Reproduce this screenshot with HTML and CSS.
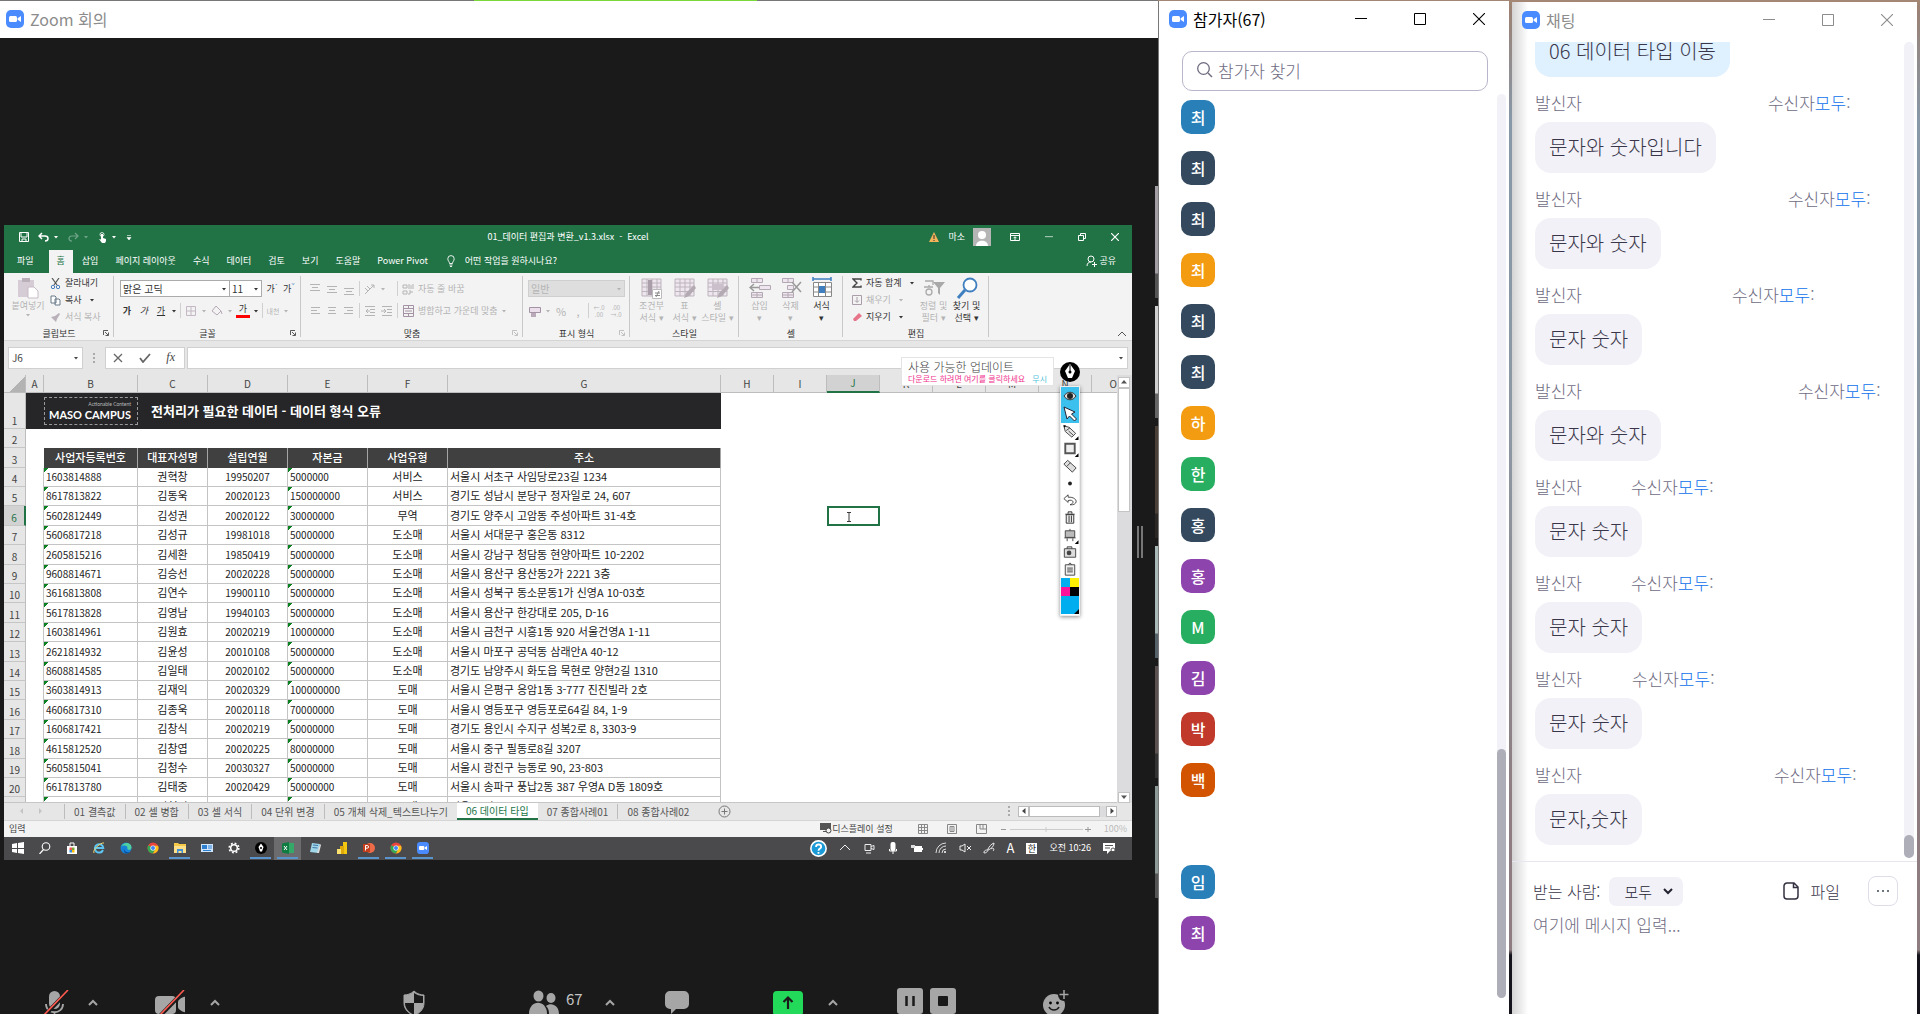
FILE: index.html
```html
<!DOCTYPE html>
<html lang="ko">
<head>
<meta charset="utf-8">
<title>Zoom 회의</title>
<link rel="stylesheet" href="styles.css">
</head>
<body>
<svg class="defs" aria-hidden="true">
  <symbol id="zoom" viewBox="0 0 18 18"><rect width="18" height="18" rx="5" fill="#4a8cff"/><rect x="3" y="6" width="8" height="6" rx="1.5" fill="#fff"/><path d="M11.6 8.2 15 6v6l-3.4-2.2z" fill="#fff"/></symbol>
  <symbol id="min" viewBox="0 0 12 12"><path d="M0 5.5h12" stroke="currentColor"/></symbol>
  <symbol id="max" viewBox="0 0 12 12"><path d="M.5.5h11v11H.5z" fill="none" stroke="currentColor"/></symbol>
  <symbol id="close" viewBox="0 0 12 12"><path d="m0 0 12 12M12 0 0 12" stroke="currentColor" stroke-width="1.1"/></symbol>
  <symbol id="caret" viewBox="0 0 6 6"><path d="M1 2h4L3 4.500z" fill="currentColor"/></symbol>
  <symbol id="up" viewBox="0 0 10 7"><path d="m1 6 4-4 4 4" fill="none" stroke="currentColor" stroke-width="2"/></symbol>
  <symbol id="launch" viewBox="0 0 6 6"><path d="M.5 5V.5H5M2 2l3 3M5.500 2.500v3h-3" fill="none" stroke="currentColor" stroke-width=".8"/></symbol>
  <symbol id="chrome" viewBox="0 0 12 12"><circle cx="6" cy="6" r="5.500" fill="#e8453c"/><path d="M1.200 3.300A5.500 5.500 0 0 0 6 11.500L8.300 7z" fill="#34a853"/><path d="M6 11.500A5.500 5.500 0 0 0 11 3.700H6l2.300 3.600z" fill="#fbc116"/><circle cx="6" cy="6" r="2.600" fill="#fff"/><circle cx="6" cy="6" r="2" fill="#4285f4"/></symbol>
  <symbol id="table" viewBox="0 0 22 22"><path d="M1 2h19v17H1zM1 6h19M1 10h19M1 14.500h19M6 2v17M11 2v17M16 2v17" fill="#eee6ee" stroke="#bdb4bd"/></symbol>
</svg>

<main class="desktop">
  <section class="window meeting" aria-label="Zoom 회의">
    <header class="titlebar"><svg class="logo"><use href="#zoom"/></svg><h1>Zoom 회의</h1></header>
    <div class="stage">
      <div class="excel">
        <div class="x-title">
          <div class="x-quick">
            <svg width="10" height="10" viewBox="0 0 10 10"><path d="M.5.5h9v9h-9zM2 1v4h6V1M3 9V7h4v2" fill="none" stroke="#fff"/></svg>
            <svg width="11" height="10" viewBox="0 0 11 10"><path d="M4 1 1 4l3 3M1 4h6c4 0 4 5 0 5" fill="none" stroke="#fff" stroke-width="1.500"/></svg>
            <svg class="near" width="6" height="6"><use href="#caret"/></svg>
            <svg class="dim" width="11" height="10" viewBox="0 0 11 10"><path d="m7 1 3 3-3 3M10 4H4C0 4 0 9 4 9" fill="none" stroke="#fff" stroke-width="1.200"/></svg>
            <svg class="dim near" width="6" height="6"><use href="#caret"/></svg>
            <svg width="9" height="11" viewBox="0 0 9 11"><circle cx="4" cy="2.500" r="2" fill="none" stroke="#fff" stroke-width=".8"/><path d="M3 2h2v4l3 1v2l-1 2H4L1 7l2 .5z" fill="#fff"/></svg>
            <svg class="near" width="6" height="6"><use href="#caret"/></svg>
            <svg width="6" height="8" viewBox="0 0 6 8"><path d="M1 2.500h4M1 4.500h4L3 7z" fill="#fff" stroke="#fff" stroke-width=".6"/></svg>
          </div>
          <p>01_데이터 편집과 변환_v1.3.xlsx&nbsp; -&nbsp; Excel</p>
          <div class="x-account">
            <svg width="10" height="10" viewBox="0 0 10 10"><path d="m5 0 5 10H0z" fill="#f3b35a"/><path d="M5 3v4M5 8v1" stroke="#333"/></svg>
            <span>마소</span>
            <svg class="face" width="18" height="18" viewBox="0 0 18 18"><path d="M0 0h18v18H0z" fill="#b5b5b5"/><circle cx="9" cy="7" r="4" fill="#fff"/><path d="M3 18c0-7 12-7 12 0z" fill="#fff"/></svg>
            <svg class="ribbon-toggle" width="10" height="10" viewBox="0 0 10 10"><path d="M.5 1.500h9v7h-9zM.5 3.500h9M5 8V5M3.500 6.200 5 4.700l1.500 1.500" fill="none" stroke="#fff"/></svg>
            <button aria-label="최소화"><svg width="8" height="8"><use href="#min"/></svg></button>
            <button aria-label="복원"><svg width="8" height="8" viewBox="0 0 8 8"><path d="M.5 2.500h5v5h-5zM2.500 2V.5h5v5H6" fill="none" stroke="#fff"/></svg></button>
            <button aria-label="닫기"><svg width="8" height="8" viewBox="0 0 8 8"><path d="m0 0 8 8M8 0 0 8" stroke="#fff" stroke-width="1.200"/></svg></button>
          </div>
        </div>
        <nav class="x-tabs">
          <button class="file">파일</button><button class="on">홈</button><button>삽입</button><button>페이지 레이아웃</button><button>수식</button><button>데이터</button><button>검토</button><button>보기</button><button>도움말</button><button>Power Pivot</button>
          <label class="tell"><svg width="8" height="12" viewBox="0 0 8 12"><path d="M2.500 8.500C2.500 6.500.8 6 .8 3.800a3.200 3.200 0 0 1 6.400 0C7.200 6 5.500 6.500 5.500 8.500zM2.500 10h3M3 11.500h2" fill="none" stroke="#fff" stroke-width=".9"/></svg><input value="어떤 작업을 원하시나요?"></label>
          <button class="share"><svg width="11" height="12" viewBox="0 0 11 12"><circle cx="5" cy="4" r="3" fill="none" stroke="#fff"/><path d="M1 11c0-3 2-4 4-4M6 9.500h5M8.500 7v5" fill="none" stroke="#fff"/></svg>공유</button>
        </nav>

        <div class="ribbon">
          <section class="group clip">
            <div class="g-body">
              <button class="big off"><svg width="22" height="22" viewBox="0 0 22 22"><path d="M1 3h16v17H1z" fill="#d6ccd6"/><path d="M5 1h8v4H5z" fill="#b9b0b9"/><path d="M11 10h6l4 4v7H11z" fill="#fff" stroke="#c5bcc5"/></svg><span>붙여넣기</span><svg class="car"><use href="#caret"/></svg></button>
              <div class="stack">
                <button><svg width="11" height="11" viewBox="0 0 11 11"><path d="m2 0 5 7M9 0 4 7" stroke="#555" stroke-width="1.200"/><circle cx="3" cy="9" r="1.700" fill="none" stroke="#4a7ebb"/><circle cx="8" cy="9" r="1.700" fill="none" stroke="#4a7ebb"/></svg>잘라내기</button>
                <button><svg width="11" height="11" viewBox="0 0 11 11"><path d="M1 1h4l1 1v6H1zM5 4h4l1 1v5H5z" fill="#fff" stroke="#687888"/></svg>복사<svg class="car"><use href="#caret"/></svg></button>
                <button class="off"><svg width="11" height="11" viewBox="0 0 11 11"><path d="m1 5 5 5 1-3 3-5-1-1-4 3z" fill="#b9b0b9"/></svg>서식 복사</button>
              </div>
            </div>
            <h2>클립보드</h2><svg class="launch"><use href="#launch"/></svg>
          </section>
          <section class="group font">
            <div class="g-rows">
              <div class="r-row tight">
                <span class="combo name"><select aria-label="글꼴"><option>맑은 고딕</option></select><svg><use href="#caret"/></svg></span><span class="combo size"><select aria-label="글꼴 크기"><option>11</option></select><svg><use href="#caret"/></svg></span>
                <button class="glyph">가<sup>ˆ</sup></button><button class="glyph">가<sup>ˇ</sup></button>
              </div>
              <div class="r-row">
                <button class="glyph b">가</button><button class="glyph i">가</button><button class="glyph u">가</button><svg class="car"><use href="#caret"/></svg><i class="sep"></i>
                <svg class="ic" viewBox="0 0 14 14"><path d="M2.500 2.500h9v9h-9zM7 2v10M2 7h10" fill="none" stroke="#c3b8c3"/></svg><svg class="car off"><use href="#caret"/></svg>
                <svg class="ic" viewBox="0 0 14 14"><path d="m6 2 5 5-4 4-5-4zM11 7l1 3" fill="none" stroke="#b5aab5"/></svg><svg class="car off"><use href="#caret"/></svg>
                <button class="glyph red">가</button><svg class="car"><use href="#caret"/></svg><i class="sep"></i>
                <button class="glyph tiny off">내천</button><svg class="car off"><use href="#caret"/></svg>
              </div>
            </div>
            <h2>글꼴</h2><svg class="launch"><use href="#launch"/></svg>
          </section>
          <section class="group align">
            <div class="g-rows">
              <div class="r-row off">
                <svg class="ic" viewBox="0 0 14 14"><path d="M2 2.500h10M4 5.500h6M2 8.500h10" stroke="currentColor"/></svg><svg class="ic" viewBox="0 0 14 14"><path d="M2 4.500h10M4 7.500h6M2 10.500h10" stroke="currentColor"/></svg><svg class="ic" viewBox="0 0 14 14"><path d="M2 6.500h10M4 9.500h6M2 12.500h10" stroke="currentColor"/></svg><i class="sep"></i>
                <svg class="ic" viewBox="0 0 14 14"><path d="m2 12 9-9M8 3h3v3M2 6l3 3M4 4l3 3" fill="none" stroke="currentColor"/></svg><span class="ic"><svg class="car"><use href="#caret"/></svg></span><i class="sep"></i>
                <svg class="ic" viewBox="0 0 14 14"><path d="M2 3h4v3H2zM8 2v5M10 3v4M12 2v5M2 9h4v3H2zM9 10h3M9 8v4H7" fill="none" stroke="currentColor"/></svg><span>자동 줄 바꿈</span>
              </div>
              <div class="r-row off">
                <svg class="ic" viewBox="0 0 14 14"><path d="M3 3.500h9M3 6.500h6M3 9.500h9" stroke="currentColor"/></svg><svg class="ic" viewBox="0 0 14 14"><path d="M3 3.500h8M4 6.500h6M3 9.500h8" stroke="currentColor"/></svg><svg class="ic" viewBox="0 0 14 14"><path d="M2 3.500h9M5 6.500h6M2 9.500h9" stroke="currentColor"/></svg><i class="sep"></i>
                <svg class="ic" viewBox="0 0 14 14"><path d="M2 2.500h10M7 5.500h5M7 8.500h5M2 11.500h10M5 5 3 7l2 2M3 7h4" fill="none" stroke="currentColor"/></svg><svg class="ic" viewBox="0 0 14 14"><path d="M2 2.500h10M7 5.500h5M7 8.500h5M2 11.500h10M4 5l2 2-2 2M1 7h5" fill="none" stroke="currentColor"/></svg><i class="sep"></i>
                <svg class="ic" viewBox="0 0 14 14"><path d="M2.500 1.500h10v11h-10zM3 4.500h9M3 9.500h9M7.500 2v2M7.500 10v2M4 7h7" fill="none" stroke="#a493a4"/></svg><span>병합하고 가운데 맞춤</span><svg class="car"><use href="#caret"/></svg>
              </div>
            </div>
            <h2>맞춤</h2><svg class="launch off"><use href="#launch"/></svg>
          </section>
          <section class="group number">
            <div class="g-rows">
              <div class="r-row"><span class="combo fmt"><select aria-label="표시 형식" disabled><option>일반</option></select><svg><use href="#caret"/></svg></span></div>
              <div class="r-row off">
                <svg class="ic" viewBox="0 0 14 14"><path d="M1.500 3.500h11v5h-11z" fill="#eadfea" stroke="#a493a4"/><path d="M3 9h5v4H3z" fill="#b9a9b9"/></svg><svg class="car"><use href="#caret"/></svg><button class="glyph pct">%</button><button class="glyph pct">,</button><i class="sep"></i><button class="glyph dec">←.0<br>.00</button><button class="glyph dec">.00<br>→.0</button>
              </div>
            </div>
            <h2>표시 형식</h2><svg class="launch off"><use href="#launch"/></svg>
          </section>
          <section class="group style">
            <div class="g-body off">
              <button class="big"><svg width="22" height="22"><use href="#table"/><path d="M7 3h4v15H7z" fill="#a99ea9"/><path d="M11.500 12.500h9v9h-9z" fill="#fff" stroke="#bbb"/><path d="M14 16h5M14 18.500h5M18 14l-3 6" stroke="#888"/></svg><span>조건부<br>서식 ▾</span></button>
              <button class="big"><svg width="22" height="22"><use href="#table"/><path d="m20 8-8 8-2 5 5-2 7-8z" fill="#b3aab3"/></svg><span>표<br>서식 ▾</span></button>
              <button class="big"><svg width="22" height="22"><use href="#table"/><path d="M5 7h11v6H5z" fill="#cbbfcb"/><path d="m20 8-8 8-2 5 5-2 7-8z" fill="#b3aab3"/></svg><span>셀<br>스타일 ▾</span></button>
            </div>
            <h2>스타일</h2>
          </section>
          <section class="group cells">
            <div class="g-body">
              <button class="big off"><svg width="22" height="22" viewBox="0 0 22 22"><path d="M2.500 1.500h11v4h-11zM8 2v3M2.500 15.500h11v5h-11zM8 16v4M2 18h11M10.500 8.500h11v4h-11z" fill="#eee6ee" stroke="#b3a8b3"/><path d="m5 7-4 3.500L5 14M1 10.500h9" fill="none" stroke="#999" stroke-width="1.500"/></svg><span>삽입<br>▾</span></button>
              <button class="big off"><svg width="22" height="22" viewBox="0 0 22 22"><path d="M2.500 1.500h11v4h-11zM8 2v3M2.500 15.500h11v5h-11zM8 16v4M2 18h11M7.500 8.500h6v4h-6z" fill="#eee6ee" stroke="#b3a8b3"/><path d="m12 5 9 10M21 5l-9 10" fill="none" stroke="#999" stroke-width="1.500"/></svg><span>삭제<br>▾</span></button>
              <button class="big"><svg width="22" height="22" viewBox="0 0 22 22"><path d="M2.500 5.500h18v14h-18zM3 10h17M3 15h17M7.500 6v13M14.500 6v13" fill="#fff" stroke="#888"/><path d="M8 9h6v7H8z" fill="#3f7fc0"/><path d="M2 2h18M2 0v4M20 0v4" stroke="#3f7fc0" stroke-width="1.500"/></svg><span>서식<br>▾</span></button>
            </div>
            <h2>셀</h2>
          </section>
          <section class="group edit">
            <div class="g-body">
              <div class="stack">
                <button><svg width="10" height="10" viewBox="0 0 10 10"><path d="M9 2.500V1H1l4 4-4 4h8V7.500" fill="none" stroke="#444" stroke-width="1.400"/></svg>자동 합계<svg class="car"><use href="#caret"/></svg></button>
                <button class="off"><svg width="10" height="10" viewBox="0 0 10 10"><path d="M.5.5h9v9h-9zM5 2v5M3 5.500l2 2 2-2" fill="none" stroke="#a99ea9"/></svg>채우기<svg class="car"><use href="#caret"/></svg></button>
                <button><svg width="10" height="10" viewBox="0 0 10 10"><path d="m1 7 6-6 3 3-6 5H2z" fill="#e8748a"/></svg>지우기<svg class="car"><use href="#caret"/></svg></button>
              </div>
              <button class="big off"><svg width="22" height="22" viewBox="0 0 22 22"><path d="M2 4h8v4M1 10h9M6 8v2" fill="none" stroke="#aaa" stroke-width="1.300"/><circle cx="6" cy="15" r="3" fill="none" stroke="#aaa" stroke-width="1.300"/><path d="M10 5h12l-5 6v7l-2-2v-5z" fill="#a9a9a9"/></svg><span>정렬 및<br>필터 ▾</span></button>
              <button class="big"><svg width="22" height="22" viewBox="0 0 22 22"><circle cx="14" cy="8" r="6.500" fill="#fff" stroke="#3f7fc0" stroke-width="1.800"/><path d="m9 13-7 8" stroke="#3f7fc0" stroke-width="3"/></svg><span>찾기 및<br>선택 ▾</span></button>
            </div>
            <h2>편집</h2>
          </section>
          <button class="collapse" aria-label="리본 메뉴 축소"><svg width="8" height="6" viewBox="0 0 8 6"><path d="m0 5 4-4 4 4" fill="none" stroke="#555"/></svg></button>
        </div>

        <div class="formula">
          <div class="namebox"><input aria-label="이름 상자" value="J6"><svg class="car"><use href="#caret"/></svg></div><i class="dots"></i>
          <div class="fx"><svg width="10" height="10" viewBox="0 0 10 10"><path d="m1 1 8 8M9 1 1 9" stroke="#666" stroke-width="1.300"/></svg><svg width="12" height="10" viewBox="0 0 12 10"><path d="m1 5 3 4 7-8" fill="none" stroke="#666" stroke-width="1.800"/></svg><em>fx</em></div>
          <div class="fbar"><input aria-label="수식 입력줄"><svg class="car"><use href="#caret"/></svg></div>
        </div>

        <div class="sheet">
          <div class="cells-view">
          <table>
            <colgroup><col class="c-n"><col class="c-a"><col class="c-b"><col class="c-c"><col class="c-d"><col class="c-d"><col class="c-d"><col class="c-g"><col class="c-h"><col class="c-h"><col class="c-h"><col class="c-h"><col class="c-h"><col class="c-h"><col class="c-h"><col></colgroup>
            <thead><tr><th class="corner"></th><th>A</th><th>B</th><th>C</th><th>D</th><th>E</th><th>F</th><th>G</th><th>H</th><th>I</th><th class="cur">J</th><th>K</th><th>L</th><th>M</th><th>N</th><th class="cut">O</th></tr></thead>
            <tbody>
            <tr class="banner"><th>1</th><td colspan="7"><div class="band"><div class="maso"><small>Actionable Content</small><b>MASO CAMPUS</b></div><strong>전처리가 필요한 데이터 - 데이터 형식 오류</strong></div></td><td colspan="8"></td></tr>
            <tr><th>2</th><td colspan="15"></td></tr>
            <tr class="heads"><th>3</th><td></td><td>사업자등록번호</td><td>대표자성명</td><td>설립연월</td><td>자본금</td><td>사업유형</td><td>주소</td><td colspan="8"></td></tr>
            <tr class="d"><th>4</th><td></td><td>1603814888</td><td>권혁창</td><td>19950207</td><td>5000000</td><td>서비스</td><td>서울시 서초구 사임당로23길 1234</td><td colspan="8"></td></tr>
            <tr class="d"><th>5</th><td></td><td>8617813822</td><td>김동욱</td><td>20020123</td><td>150000000</td><td>서비스</td><td>경기도 성남시 분당구 정자일로 24, 607</td><td colspan="8"></td></tr>
            <tr class="d now"><th>6</th><td></td><td>5602812449</td><td>김성권</td><td>20020122</td><td>30000000</td><td>무역</td><td>경기도 양주시 고암동 주성아파트 31-4호</td><td colspan="2"></td><td class="picked"><svg width="6" height="10" viewBox="0 0 6 10"><path d="M1 .5h4M1 9.500h4M3 1v8" stroke="#222" stroke-width=".9"/></svg></td><td colspan="5"></td></tr>
            <tr class="d"><th>7</th><td></td><td>5606817218</td><td>김성규</td><td>19981018</td><td>50000000</td><td>도소매</td><td>서울시 서대문구 홍은동 8312</td><td colspan="8"></td></tr>
            <tr class="d"><th>8</th><td></td><td>2605815216</td><td>김세환</td><td>19850419</td><td>50000000</td><td>도소매</td><td>서울시 강남구 청담동 현양아파트 10-2202</td><td colspan="8"></td></tr>
            <tr class="d"><th>9</th><td></td><td>9608814671</td><td>김승선</td><td>20020228</td><td>50000000</td><td>도소매</td><td>서울시 용산구 용산동2가 2221 3층</td><td colspan="8"></td></tr>
            <tr class="d"><th>10</th><td></td><td>3616813808</td><td>김연수</td><td>19900110</td><td>50000000</td><td>도소매</td><td>서울시 성북구 동소문동1가 신영A 10-03호</td><td colspan="8"></td></tr>
            <tr class="d"><th>11</th><td></td><td>5617813828</td><td>김영남</td><td>19940103</td><td>50000000</td><td>도소매</td><td>서울시 용산구 한강대로 205, D-16</td><td colspan="8"></td></tr>
            <tr class="d"><th>12</th><td></td><td>1603814961</td><td>김원효</td><td>20020219</td><td>10000000</td><td>도소매</td><td>서울시 금천구 시흥1동 920 서울건영A 1-11</td><td colspan="8"></td></tr>
            <tr class="d"><th>13</th><td></td><td>2621814932</td><td>김윤성</td><td>20010108</td><td>50000000</td><td>도소매</td><td>서울시 마포구 공덕동 삼래안A 40-12</td><td colspan="8"></td></tr>
            <tr class="d"><th>14</th><td></td><td>8608814585</td><td>김일태</td><td>20020102</td><td>50000000</td><td>도소매</td><td>경기도 남양주시 화도읍 묵현로 양현2길 1310</td><td colspan="8"></td></tr>
            <tr class="d"><th>15</th><td></td><td>3603814913</td><td>김재익</td><td>20020329</td><td>100000000</td><td>도매</td><td>서울시 은평구 응암1동 3-777 진진빌라 2호</td><td colspan="8"></td></tr>
            <tr class="d"><th>16</th><td></td><td>4606817310</td><td>김종욱</td><td>20020118</td><td>70000000</td><td>도매</td><td>서울시 영등포구 영등포로64길 84, 1-9</td><td colspan="8"></td></tr>
            <tr class="d"><th>17</th><td></td><td>1606817421</td><td>김창식</td><td>20020219</td><td>50000000</td><td>도매</td><td>경기도 용인시 수지구 성복2로 8, 3303-9</td><td colspan="8"></td></tr>
            <tr class="d"><th>18</th><td></td><td>4615812520</td><td>김창엽</td><td>20020225</td><td>80000000</td><td>도매</td><td>서울시 중구 필동로8길 3207</td><td colspan="8"></td></tr>
            <tr class="d"><th>19</th><td></td><td>5605815041</td><td>김청수</td><td>20030327</td><td>50000000</td><td>도매</td><td>서울시 광진구 능동로 90, 23-803</td><td colspan="8"></td></tr>
            <tr class="d"><th>20</th><td></td><td>6617813780</td><td>김태중</td><td>20020429</td><td>50000000</td><td>도매</td><td>서울시 송파구 풍납2동 387 우영A D동 1809호</td><td colspan="8"></td></tr>
            <tr class="d"><th></th><td></td><td></td><td>김현정</td><td></td><td></td><td>도매</td><td>서울시 서초구</td><td colspan="8"></td></tr>
            </tbody>
          </table>
          </div>
          <div class="vscroll"><button aria-label="위로"><svg width="6" height="6" viewBox="0 0 6 6"><path d="M0 4.500h6L3 1z" fill="#555"/></svg></button><i></i><button aria-label="아래로"><svg width="6" height="6" viewBox="0 0 6 6"><path d="M0 1.500h6L3 5z" fill="#555"/></svg></button></div>
          <aside class="notice"><b>사용 가능한 업데이트</b><p><a href="#">다운로드 하려면 여기를 클릭하세요</a><a class="skip" href="#">무시</a></p></aside>
          <aside class="pen">
            <svg class="pen-logo" viewBox="0 0 20 20"><circle cx="10" cy="10" r="10"/><path d="M10 2 5 9l3 7h4l3-7z" fill="#fff"/><circle cx="10" cy="10" r="1.500"/><path d="M10 3v7" stroke="#000"/></svg>
            <div class="pen-tools">
              <svg class="hot" viewBox="0 0 18 18"><path d="M3 9c3-5 9-5 12 0-3 5-9 5-12 0z" fill="#ddd" stroke="#333"/><circle cx="9" cy="9" r="3" fill="#222"/></svg>
              <svg class="hot" viewBox="0 0 18 18"><path d="m3 2 3 12 2.500-3 5 5 2-2-5-5 3.500-2z" fill="#fff" stroke="#223"/></svg>
              <svg viewBox="0 0 18 18"><path d="M2.500 3 8 4.500l7 6.500-4 4-7-6zM5 8l4-3M7.500 8.500l5 4.500" fill="#e4e4e4" stroke="#444"/><path d="m2 2 3 1-2 2zM18 14v4h-4z"/></svg>
              <svg viewBox="0 0 18 18"><path d="M4 4h10v10H4z" fill="#eee" stroke="#555" stroke-width="2"/><path d="M18 14v4h-4z"/></svg>
              <svg viewBox="0 0 18 18"><path d="m2.500 6.500 4-4 9 8-4 4.500zM5.500 9l4-4" fill="#ddd" stroke="#444"/></svg>
              <svg viewBox="0 0 18 18"><circle cx="9" cy="9" r="2" fill="#222"/></svg>
              <svg viewBox="0 0 18 18"><path d="M7 3 2.500 7 7 11V9c6-1.500 7 3 2 4.500 9 1 9-8.500-2-8z" fill="#fff" stroke="#444"/></svg>
              <svg viewBox="0 0 18 18"><path d="M5 6h8v9H5zM4 5.500h10M7 5V3h4v2M8 7v7M10.500 7v7" fill="#eee" stroke="#333"/></svg>
              <svg viewBox="0 0 18 18"><path d="M4 4h10v7H4zM3 11.500h12M6 12v3M12 12v3M9 2v2" fill="#bbb" stroke="#444"/><path d="M18 14v4h-4z"/></svg>
              <svg viewBox="0 0 18 18"><path d="M3 5h12v9H3zM6 5V3h5v2" fill="#ddd" stroke="#444"/><circle cx="8" cy="9.500" r="2.500" fill="#444"/></svg>
              <svg viewBox="0 0 18 18"><path d="M4 4h10v11H4zM7 4l2-2 2 2M6 7.500h6M6 9.500h6M6 11.500h6" fill="#eee" stroke="#444"/></svg>
              <svg class="flat" viewBox="0 0 18 36"><path d="M0 0h9v9H0zM0 18h18v18H0z" fill="#00aeef"/><path d="M9 0h9v9H9z" fill="#fff200"/><path d="M0 9h9v9H0z" fill="#ff1199"/><path d="M9 9h9v9H9zM18 31v5h-5z"/></svg>
            </div>
          </aside>
        </div>

        <div class="sheets">
          <svg class="nav" width="22" height="6" viewBox="0 0 22 6"><path d="M3 0v6L0 3zM19 0v6l3-3z" fill="#c4c4c4"/></svg>
          <button>01 결측값</button><button>02 셀 병합</button><button>03 셀 서식</button><button>04 단위 변경</button><button>05 개체 삭제_텍스트나누기</button><button class="on">06 데이터 타입</button><button>07 종합사례01</button><button>08 종합사례02</button>
          <svg class="add" width="13" height="13" viewBox="0 0 13 13"><path d="M6.500 3.500v6M3.500 6.500h6" stroke="#777"/><circle cx="6.500" cy="6.500" r="5.500" fill="none" stroke="#777"/></svg>
          <i class="dots"></i>
          <div class="hscroll"><button aria-label="왼쪽"><svg width="6" height="6" viewBox="0 0 6 6"><path d="M4.500 0v6L1 3z" fill="#444"/></svg></button><i></i><button aria-label="오른쪽"><svg width="6" height="6" viewBox="0 0 6 6"><path d="M1.500 0v6L5 3z" fill="#444"/></svg></button></div>
        </div>
        <div class="status">
          <span>입력</span>
          <span class="disp"><svg width="12" height="11" viewBox="0 0 12 11"><path d="M0 0h11v7H0zM3 8h3v1H3z" fill="#555"/><circle cx="8.500" cy="7.500" r="2.500" fill="#f3f3f3" stroke="#444"/></svg>디스플레이 설정</span>
          <svg class="v1" width="10" height="10" viewBox="0 0 10 10"><path d="M.5.5h9v9h-9zM3.500 0v10M6.500 0v10M0 3.500h10M0 6.500h10" fill="none" stroke="#888"/></svg>
          <svg width="10" height="10" viewBox="0 0 10 10"><path d="M.5.5h9v9h-9zM3 2.500h4v5H3zM4 4h2M4 6h2" fill="none" stroke="#888"/></svg>
          <svg width="11" height="10" viewBox="0 0 11 10"><path d="M.5.5h10v9H.5zM4 0v5h3V0M7 5h3" fill="none" stroke="#888"/></svg>
          <svg class="zoomer" width="90" height="10" viewBox="0 0 90 10"><path d="M0 5.500h5M84 5.500h6M87 3v5" stroke="#999"/><path d="M9 5.500h73M45 3v5" stroke="#ccc"/></svg>
          <span class="zoom">100%</span>
        </div>
        <div class="taskbar">
          <span><svg viewBox="0 0 12 12"><path d="m0 2 5-1v5H0zM6 1l6-1v6H6zM0 7h5v4l-5-1zM6 7h6v5l-6-1z" fill="#fff"/></svg></span>
          <span><svg viewBox="0 0 12 12"><circle cx="7" cy="4.500" r="3.800" fill="none" stroke="#fff" stroke-width="1.100"/><path d="m4.500 7.500-4 4.500" stroke="#fff" stroke-width="1.200"/></svg></span>
          <span><svg viewBox="0 0 12 12"><path d="M1 4h10v8H1z" fill="#fff"/><path d="M4 4V1h4v3" fill="none" stroke="#fff"/><path d="M3.500 5.500H6V8H3.500z" fill="#e55"/><path d="M6 5.500h2.500V8H6z" fill="#7a3"/><path d="M3.500 8H6v2.500H3.500z" fill="#38d"/><path d="M6 8h2.500v2.500H6z" fill="#fb0"/></svg></span>
          <span><svg viewBox="0 0 12 12"><path d="M10 8a4.200 4.200 0 1 1 .3-2H3" fill="none" stroke="#5cc5f2" stroke-width="2"/><path d="M1 11C-1 8 8 0 11 1" fill="none" stroke="#f5d76a"/></svg></span>
          <span><svg viewBox="0 0 12 12"><circle cx="6" cy="6" r="5.500" fill="#1683d8"/><path d="M1 5c2-6 11-5 10.500 1-1 3-5 2-4 0C7 3 3 3 1 5z" fill="#4fd0a0"/><path d="M4 6c0 4 4 5 6 4-3 3-7 1-6-4z" fill="#0b4f9c"/></svg></span>
          <span><svg><use href="#chrome"/></svg></span>
          <span class="open"><svg viewBox="0 0 12 12"><path d="M0 1h4l1 1h7v9H0z" fill="#f7c948"/><path d="M0 4h12v7H0z" fill="#ffe08a"/><path d="M3 11V7h6v4H7.500V9h-3v2z" fill="#3f8fd9"/></svg></span>
          <span><svg viewBox="0 0 12 12"><path d="M0 2h12v8H0z" fill="#cfe5fb"/><path d="M1 3h5v4H1z" fill="#2f7fd0"/><path d="M7 4h4M7 6h4M2 8.500h8" stroke="#2f7fd0"/></svg></span>
          <span><svg viewBox="0 0 12 12"><circle cx="6" cy="6" r="3.300" fill="none" stroke="#fff" stroke-width="1.500"/><circle cx="6" cy="6" r="4.800" fill="none" stroke="#fff" stroke-width="1.600" stroke-dasharray="1.900 1.870"/></svg></span>
          <span class="open"><svg viewBox="0 0 12 12"><circle cx="6" cy="6" r="6"/><path d="M6 1.500 3.500 5 5 9.500h2L8.500 5z" fill="#fff"/><circle cx="6" cy="6" r="1"/></svg></span>
          <span class="open sel"><svg viewBox="0 0 12 12"><path d="M5 1h7v10H5z" fill="#33a867"/><path d="M0 1.500 7 0v12L0 10.500z" fill="#107c41"/><path d="m2 4 3 4M5 4 2 8" stroke="#fff"/></svg></span>
          <span><svg viewBox="0 0 12 12"><path d="m3 1 8 1-2 9-8-1z" fill="#9fd6e8"/><path d="m4 3 5 .5M3.500 5.500l5 .5" stroke="#47a"/><path d="m8 11 3-9 1 1-2 8z" fill="#ddd"/></svg></span>
          <span><svg viewBox="0 0 12 12"><path d="M7 0h4v12H7z" fill="#f2c811"/><path d="M4 4h4v8H4z" fill="#e0a90b"/><path d="M1 7h4v5H1z" fill="#fbe16d"/></svg></span>
          <span class="open"><svg viewBox="0 0 12 12"><circle cx="7" cy="6" r="5" fill="#ed6c47"/><path d="M0 2h7v8H0z" fill="#c43e1c"/><path d="M2.500 8.500v-5h1.700a1.300 1.300 0 0 1 0 2.700H3" fill="none" stroke="#fff"/></svg></span>
          <span class="open"><svg><use href="#chrome"/></svg></span>
          <span class="open"><svg><use href="#zoom"/></svg></span>
          <div class="tray">
            <svg class="help" viewBox="0 0 16 16"><circle cx="8" cy="8" r="7.200" fill="#1a9ad6" stroke="#fff" stroke-width="1.500"/><path d="M5.700 6.500c0-3 4.800-3 4.800 0C10.500 8 8 8 8 10M8 11.300V13" fill="none" stroke="#fff" stroke-width="1.700"/></svg>
            <svg viewBox="0 0 12 12"><path d="m1 8 5-5 5 5" fill="none" stroke="#eee"/></svg>
            <svg viewBox="0 0 12 12"><path d="M2 2.500h6v6H2zM8 4.500l3-1v4l-3-1M3 11h5" fill="none" stroke="#eee"/></svg>
            <svg viewBox="0 0 12 12"><rect x="3.500" y="0" width="5" height="9" rx="2" fill="#fff"/><path d="M2.500 7v2h7V7M6 9v3" fill="none" stroke="#fff"/></svg>
            <svg viewBox="0 0 12 12"><path d="M3 4h8v6H3zM11 6h1v2h-1z" fill="#fff"/><path d="M0 3h4v3H0z" fill="#ddd"/></svg>
            <svg viewBox="0 0 12 12"><path d="M1 11A10 10 0 0 1 11 1M4 11a7 7 0 0 1 7-7M7 11a4 4 0 0 1 4-4" fill="none" stroke="#ddd"/><circle cx="10" cy="10" r="1" fill="#fff"/></svg>
            <svg viewBox="0 0 12 12"><path d="M1 4h2l3-2v8L3 8H1zM8 4l4 4M12 4 8 8" fill="none" stroke="#eee"/></svg>
            <svg viewBox="0 0 12 12"><path d="M1 11c0-4 3-2 4-4S8 2 11 1c0 3-3 6-6 7-1 3-3 3-4 3zM8 7c2-2 4 0 2 2" fill="none" stroke="#eee"/></svg>
            <span class="ime">A</span><span class="han">한</span><time>오전 10:26</time>
            <svg viewBox="0 0 12 12"><path d="M0 1h12v8H7l-3 3V9H0z" fill="#fff"/><path d="M2 3.500h8M2 6h5" stroke="#555"/><circle cx="10" cy="8" r="2" fill="none" stroke="#555"/></svg>
          </div>
        </div>
      </div>
      <div class="grip"><i></i></div>
      <div class="thumbs"><i class="t1"></i><i class="t2"></i><i class="t3"></i><i class="t4"></i><i class="t5"></i><i class="t6"></i></div>
    </div>
    <footer class="controls">
      <div class="audio"><button aria-label="음소거 해제"><svg width="26" height="28" viewBox="0 0 26 28"><rect x="6" y="1" width="11" height="18" rx="5.500" fill="#a6a6a6"/><path d="M3 14c0 11 17 11 17 0M11.500 22v6" fill="none" stroke="#a6a6a6" stroke-width="1.800"/><path d="M0 27 26 0" stroke="#1a1a1a" stroke-width="4"/><path d="M0 26 25 0" stroke="#ff5a50" stroke-width="1.600"/></svg></button><svg class="chev"><use href="#up"/></svg></div>
      <div><button aria-label="비디오 시작"><svg width="31" height="28" viewBox="0 0 31 28"><rect x="1" y="6" width="21" height="18" rx="4" fill="#a6a6a6"/><path d="M24 12c0-3 7-6 7-5v15c0 1-7-2-7-5z" fill="#a6a6a6"/><path d="M4 28 31 0" stroke="#1a1a1a" stroke-width="4"/><path d="M4 27 30 0" stroke="#ff5a50" stroke-width="1.600"/></svg></button><svg class="chev"><use href="#up"/></svg></div>
      <div><button aria-label="보안"><svg width="24" height="26" viewBox="0 0 24 26"><path d="M12 1c3 3 7 4 10 4v8c0 7-5 10-10 13C7 23 2 20 2 13V5c3 0 7-1 10-4z" fill="#a6a6a6" stroke="#a6a6a6"/><path d="M12 3c3 2 6 3 9 3v7h-9zM3 13h9v12c-5-3-9-6-9-12z" fill="#1a1a1a"/></svg></button></div>
      <div><button aria-label="참가자"><svg width="30" height="24" viewBox="0 0 30 24"><ellipse cx="9.500" cy="6" rx="5" ry="5.500" fill="#a6a6a6"/><ellipse cx="22" cy="8" rx="4.500" ry="5" fill="#a6a6a6"/><path d="M20 24c0-4-1-6-3-8 5-4 13-1 13 8z" fill="#a6a6a6"/><path d="M0 24c0-15 18-15 18 0z" fill="#a6a6a6"/></svg></button><span class="count">67</span><svg class="chev"><use href="#up"/></svg></div>
      <div><button aria-label="채팅"><svg width="26" height="24" viewBox="0 0 26 24"><path d="M6 1h14a5 5 0 0 1 5 5v8a5 5 0 0 1-5 5h-8l-5 5v-5H6a5 5 0 0 1-5-5V6a5 5 0 0 1 5-5z" fill="#a6a6a6"/></svg></button></div>
      <div><button aria-label="화면 공유"><svg width="30" height="24" viewBox="0 0 30 24"><rect y="1" width="30" height="25" rx="4" fill="#23d959"/><path d="M15 19V8M10.500 12 15 7.500l4.500 4.500" fill="none" stroke="#1a1a1a" stroke-width="2.200"/></svg></button><svg class="chev"><use href="#up"/></svg></div>
      <div class="rec"><button aria-label="일시 중지"><svg width="26" height="26" viewBox="0 0 26 26"><rect width="26" height="26" rx="3" fill="#a6a6a6"/><path d="M9.500 8v10M16.500 8v10" stroke="#1a1a1a" stroke-width="2.500"/></svg></button><button aria-label="기록 중지"><svg width="26" height="26" viewBox="0 0 26 26"><rect width="26" height="26" rx="3" fill="#a6a6a6"/><rect x="8" y="8" width="10" height="10" rx="1" fill="#1a1a1a"/></svg></button></div>
      <div><button aria-label="반응"><svg width="27" height="26" viewBox="0 0 27 26"><circle cx="12" cy="15" r="11" fill="#a6a6a6"/><circle cx="22" cy="5" r="6" fill="#1a1a1a"/><path d="M22 0v9M17.500 4.500h9" stroke="#a6a6a6" stroke-width="1.500"/><circle cx="8.500" cy="13" r="1.400"/><circle cx="15.500" cy="13" r="1.400"/><path d="M7 17c2 4 8 4 10 0" fill="none" stroke="#1a1a1a" stroke-width="1.600"/></svg></button></div>
    </footer>
  </section>

  <section class="window people" aria-label="참가자">
    <header class="titlebar"><svg class="logo"><use href="#zoom"/></svg><h1>참가자(67)</h1><div class="winbtns"><button aria-label="최소화"><svg><use href="#min"/></svg></button><button aria-label="최대화"><svg><use href="#max"/></svg></button><button aria-label="닫기"><svg><use href="#close"/></svg></button></div></header>
    <label class="search"><svg width="16" height="16" viewBox="0 0 16 16"><circle cx="6.500" cy="6.500" r="5.800" fill="none" stroke="#6e6b7f" stroke-width="1.300"/><path d="m11 11 4 4" stroke="#6e6b7f" stroke-width="1.500"/></svg><input placeholder="참가자 찾기" aria-label="참가자 찾기"></label>
    <div class="roster">
      <ul>
        <li class="blue">최</li><li class="navy">최</li><li class="navy">최</li><li class="amber">최</li><li class="navy">최</li><li class="navy">최</li><li class="amber">하</li><li class="green">한</li><li class="navy">홍</li><li class="violet">홍</li><li class="green">M</li><li class="violet">김</li><li class="brick">박</li><li class="rust">백</li><li></li><li class="blue">임</li><li class="violet">최</li>
      </ul>
      <div class="track"><i></i></div>
    </div>
  </section>

  <section class="window chat" aria-label="채팅">
    <header class="titlebar"><svg class="logo"><use href="#zoom"/></svg><h1>채팅</h1><div class="winbtns"><button aria-label="최소화"><svg><use href="#min"/></svg></button><button aria-label="최대화"><svg><use href="#max"/></svg></button><button aria-label="닫기"><svg><use href="#close"/></svg></button></div></header>
    <div class="log">
      <div class="msgs">
        <p class="bubble mine">06 데이터 타입 이동</p>
        <p class="from">발신자<i style="width:186px"></i>수신자<a href="#">모두</a>:</p><p class="bubble">문자와 숫자입니다</p>
        <p class="from">발신자<i style="width:206px"></i>수신자<a href="#">모두</a>:</p><p class="bubble">문자와 숫자</p>
        <p class="from">발신자<i style="width:150px"></i>수신자<a href="#">모두</a>:</p><p class="bubble">문자 숫자</p>
        <p class="from">발신자<i style="width:216px"></i>수신자<a href="#">모두</a>:</p><p class="bubble">문자와 숫자</p>
        <p class="from">발신자<i style="width:49px"></i>수신자<a href="#">모두</a>:</p><p class="bubble">문자 숫자</p>
        <p class="from">발신자<i style="width:49px"></i>수신자<a href="#">모두</a>:</p><p class="bubble">문자 숫자</p>
        <p class="from">발신자<i style="width:50px"></i>수신자<a href="#">모두</a>:</p><p class="bubble">문자 숫자</p>
        <p class="from">발신자<i style="width:192px"></i>수신자<a href="#">모두</a>:</p><p class="bubble">문자,숫자</p>
      </div>
      <div class="track"><i></i></div>
    </div>
    <div class="compose">
      <div class="to">
        <label for="to">받는 사람:</label>
        <span class="pick"><select id="to"><option>모두</option></select><svg width="10" height="7" viewBox="0 0 10 7"><path d="m1 1 4 4 4-4" fill="none" stroke="#222230" stroke-width="2"/></svg></span>
        <button class="attach"><svg width="16" height="18" viewBox="0 0 16 18"><path d="M4 1h7l4 4v9a3 3 0 0 1-3 3H4a3 3 0 0 1-3-3V4a3 3 0 0 1 3-3zM10.500 1.500V5.500h4" fill="none" stroke="#33303f" stroke-width="1.500"/></svg>파일</button>
        <button class="more" aria-label="더 보기"><svg width="14" height="4" viewBox="0 0 14 4"><path d="M1 1h2v2H1zM6 1h2v2H6zM11 1h2v2h-2z" fill="#6e7680"/></svg></button>
      </div>
      <textarea rows="3" placeholder="여기에 메시지 입력..." aria-label="메시지"></textarea>
    </div>
  </section>
</main>
</body>
</html>
```
FILE: styles.css
```css
* { box-sizing: border-box; }
body, h1, h2, p, ul { margin: 0; padding: 0; }
body { font-family: "Noto Sans CJK KR", "Noto Sans", sans-serif; background: #15131c; }
button, input, select, textarea { font: inherit; color: inherit; background: none; border: 0; padding: 0; margin: 0; outline: 0; text-align: inherit; }
svg { display: block; flex: none; }
a { text-decoration: none; }
.defs { position: absolute; width: 0; height: 0; }

/* desktop and the three windows */
.desktop { display: flex; height: 100vh; overflow: hidden; padding: 1px 3px 0 0; background: linear-gradient(90deg, #777 474px, #7bd83a 474px 757px, #777 757px 1158px, transparent 1158px) 0 0 / 100% 1px no-repeat, linear-gradient(#a48774 0, #9a8276 12px, #8798a8 120px, #8d98a3 440px, #8d7d80 800px, #8d7d80 950px, #15131c 955px); }
.window { background: #fff; overflow: hidden; display: flex; flex-direction: column; }
.meeting { flex: 1; background: #1a1a1a; }
.people { width: 351px; border-left: 1px solid #777; }
.chat { width: 405px; margin: 1px 0 0 3px; font-weight: 300; background: linear-gradient(90deg, #d4d4d4, #fff 16px); }
.titlebar { display: flex; align-items: center; flex: none; font-size: 16px; line-height: 24px; }
.titlebar h1 { font-size: 16px; font-weight: 400; }
.logo { width: 18px; height: 18px; margin-right: 6px; }
.meeting .titlebar { height: 37px; background: #fff; padding: 0 0 2px 6px; color: #8c8c8c; }
.people .titlebar { height: 36px; padding-left: 10px; color: #000; }
.chat .titlebar { height: 40px; padding: 0 0 4px 10px; color: #8c8c8c; }
.winbtns { display: flex; gap: 47px; margin-left: auto; padding-right: 24px; }
.winbtns svg { width: 12px; height: 12px; }

/* shared screen */
.stage { display: flex; align-items: center; padding: 148px 0 0 4px; }
.excel { flex: 1; min-width: 0; font-size: 9px; line-height: 12px; color: #444; background: #e6e6e6; }
.grip { width: 23px; padding-left: 5px; }
.grip i { display: block; width: 6px; height: 32px; border: solid #777; border-width: 0 2px; }
.thumbs { display: flex; flex-direction: column; gap: 8px; width: 3px; }
.thumbs i { height: 112px; }
.t1 { background: linear-gradient(#a39ea3 87px, #555 88px); }
.t2 { background: linear-gradient(#cfcfcf 87px, #666 88px); }
.t3 { background: linear-gradient(#4a4038 87px, #2c2826 88px); }
.t4 { background: linear-gradient(#a9b9b8 87px, #56636a 88px); }
.t5 { background: linear-gradient(#5b5150 87px, #333 88px); }
.t6 { background: linear-gradient(#8d9a98 87px, #555 88px); }

.x-title { display: grid; grid-template-columns: 1fr auto 1fr; align-items: center; height: 25px; background: #217346; color: #fff; }
.x-quick { display: flex; align-items: center; gap: 9px; padding-left: 15px; }
.x-quick .near { margin-left: -5px; }
.x-quick .dim { opacity: .35; }
.x-account { display: flex; align-items: center; justify-content: flex-end; gap: 25px; padding-right: 13px; }
.x-account span { margin-left: -16px; }
.x-account .face { margin-left: -17px; }
.x-account .ribbon-toggle { margin-left: -6px; }
.x-tabs { display: flex; align-items: stretch; gap: 1px; height: 23px; padding-left: 5px; background: #217346; color: #fff; }
.x-tabs button { padding: 0 8px; white-space: nowrap; }
.x-tabs .file { margin-right: 6px; }
.x-tabs .on { background: #f3f3f3; color: #217346; }
.tell { display: flex; align-items: center; gap: 10px; margin-left: 10px; }
.tell input { width: 120px; }
.x-tabs .share { display: flex; align-items: center; gap: 2px; margin-left: auto; padding-right: 16px; }

.ribbon { display: flex; height: 68px; background: #f3f3f3; border-bottom: 1px solid #d5d5d5; color: #333; }
.group { display: grid; grid-template-rows: 53px 12px; padding-top: 2px; position: relative; }
.group::after { content: ""; position: absolute; right: 0; top: 3px; bottom: 3px; width: 1px; background: #c8c8c8; }
.group h2 { font-size: 9px; font-weight: 400; text-align: center; }
.launch { position: absolute; right: 5px; bottom: 4px; width: 6px; height: 6px; }
.off { color: #b4b4b4; }
.car { width: 6px; height: 6px; }
.g-body { display: flex; }
.big { display: flex; flex-direction: column; align-items: center; padding-top: 2px; text-align: center; white-space: nowrap; }
.big span { margin-top: 1px; }
.stack { display: grid; grid-template-rows: repeat(3, 17px); }
.stack button { display: flex; align-items: center; gap: 4px; }
.stack .car { margin-left: 3px; }
.g-rows { padding-top: 3px; }
.r-row { display: flex; align-items: center; height: 22px; gap: 3px; white-space: nowrap; }
.ic { width: 14px; height: 14px; display: flex; align-items: center; }
.sep { width: 1px; height: 15px; background: #d0d0d0; }
.glyph { width: 14px; text-align: center; }
.glyph sup { font-size: 6px; line-height: 6px; color: #3f7fc0; }
.b { font-weight: 700; }
.i { font-style: italic; }
.u { text-decoration: underline; }
.red { border-bottom: 3px solid #f00; }
.tiny { font-size: 7px; }
.pct { font-size: 11px; }
.dec { font-size: 6px; line-height: 7px; }
.combo { display: grid; align-items: center; height: 17px; border: 1px solid #ababab; background: #fff; }
.combo select { grid-area: 1 / 1; appearance: none; width: 100%; padding-left: 2px; line-height: 15px; font-size: 10px; opacity: 1; }
.combo svg { grid-area: 1 / 1; justify-self: end; width: 6px; height: 6px; margin-right: 2px; pointer-events: none; }
.combo.name { width: 110px; }
.combo.size { width: 33px; margin-left: -1px; }
.combo.fmt { width: 97px; background: #dedede; border-color: #cfcfcf; color: #b4b4b4; }
.tight { gap: 0; }
.tight .glyph { margin-left: 3px; }
.clip { width: 110px; }
.clip .g-body { padding-left: 7px; gap: 5px; }
.clip .big { width: 34px; }
.font { width: 187px; }
.font .g-rows { padding-left: 6px; }
.align { width: 222px; }
.align .g-rows { padding-left: 7px; }
.number { width: 107px; }
.number .g-rows { padding-left: 5px; }
.style { width: 109px; }
.style .g-body { padding-left: 5px; }
.style .big, .edit .big { width: 33px; }
.cells { width: 104px; }
.cells .g-body { padding-left: 5px; }
.cells .big { width: 31px; }
.edit { width: 146px; }
.edit .g-body { padding-left: 9px; }
.edit .stack { width: 65px; }
.collapse { margin: auto 6px 3px auto; }

.formula { display: flex; align-items: center; height: 34px; padding: 0 4px; font-size: 10px; }
.namebox, .fbar, .fx { display: flex; align-items: center; height: 22px; background: #fff; border: 1px solid #d0d0d0; padding-right: 3px; }
.namebox input, .fbar input { flex: 1; min-width: 0; }
.namebox { width: 75px; padding-left: 3px; }
.dots { width: 2px; height: 10px; margin: 0 10px; background: repeating-linear-gradient(#aaa 0 2px, transparent 2px 4px); }
.fx { justify-content: space-between; width: 80px; padding: 0 9px 0 7px; }
.fx em { font: italic 12px "Liberation Serif", serif; }
.fbar { flex: 1; margin-left: 2px; }

/* worksheet */
.sheet { display: flex; position: relative; height: 428px; }
.cells-view { flex: 1; min-width: 0; height: 428px; overflow: hidden; background: #fff; border-bottom: 1px solid #c6c6c6; }
table { width: 100%; table-layout: fixed; border-collapse: separate; border-spacing: 0; font-size: 11px; line-height: 15px; color: #222; }
.c-n { width: 22px; } .c-a { width: 18px; } .c-b { width: 94px; } .c-c { width: 70px; }
.c-d { width: 80px; } .c-g { width: 273px; } .c-h { width: 53px; }
td, th { padding: 0; white-space: nowrap; overflow: hidden; }
th { font-weight: 400; font-size: 10px; color: #444; background: #e6e6e6; border-right: 1px solid #bdbdbd; text-align: center; }
thead tr { height: 18px; }
thead th { border-bottom: 1px solid #bdbdbd; }
thead .cur { background: #d2d2d2; color: #217346; border-bottom: 2px solid #217346; }
thead .cut { text-align: right; border-right: 0; }
.corner { background: linear-gradient(135deg, #e6e6e6 60%, #b3b3b3 60%); }
tbody tr { height: 19px; }
tbody tr:nth-child(5n+1), tbody tr:nth-child(5n+3) { height: 20px; }
tbody tr.banner { height: 36px; }
tbody th { border-bottom: 1px solid #c6c6c6; vertical-align: bottom; }
.band { display: flex; align-items: center; height: 36px; padding-left: 18px; background: #262628; color: #fff; }
.maso { width: 94px; height: 28px; padding: 2px 6px 0 0; border: 1px dashed #999; text-align: right; font-family: Lato, sans-serif; }
.maso small { display: block; font-size: 5px; line-height: 9px; color: #bbb; }
.maso b { display: block; font-size: 11px; line-height: 12px; }
.band strong { margin-left: 13px; font-size: 13px; line-height: 20px; }
.heads td:nth-child(n+3):nth-child(-n+8) { background: #404040; color: #fff; text-align: center; font-weight: 500; border-right: 1px solid #a5a5a5; }
.d td:nth-child(n+3):nth-child(-n+8) { border: solid #c4c4c4; border-width: 0 1px 1px 0; text-align: center; }
.d td:nth-child(2) { border-right: 1px solid #c4c4c4; }
.d td:nth-child(3), .d td:nth-child(6) { background: linear-gradient(135deg, #0a8020 3px, transparent 3px); }
.d td.picked { border: 2px solid #217346; }
.d td:nth-child(3), .d td:nth-child(5), .d td:nth-child(6) { font-size: 10px; }
.d td:nth-child(3):nth-child(n), .d td:nth-child(6):nth-child(n), .d td:nth-child(8):nth-child(n) { text-align: left; padding-left: 2px; }
.now th { background: #d2d2d2; color: #217346; border-right: 2px solid #217346; }
.picked svg { margin: 2px auto 0 17px; }
.vscroll { display: flex; flex-direction: column; width: 15px; padding: 2px 2px 0 1px; background: #dcdbdd; }
.vscroll button, .hscroll button { display: grid; place-content: center; width: 12px; height: 11px; background: #fff; border: 1px solid #c4c4c4; }
.vscroll i { width: 12px; height: 124px; margin-bottom: auto; background: #fff; border: 1px solid #c4c4c4; }

/* annotation tool floating over the sheet */
.notice { position: absolute; right: 78px; top: -18px; width: 153px; height: 29px; padding: 2px 6px; background: #fff; border: 1px solid #e4e4e4; line-height: 12px; }
.notice b { display: block; font-weight: 300; font-size: 12px; line-height: 14px; }
.notice p { display: flex; justify-content: space-between; font-size: 8px; line-height: 10px; white-space: nowrap; }
.notice a { color: #f0308c; }
.notice .skip { color: #4dbfd9; }
.pen { position: absolute; right: 52px; top: -13px; width: 20px; }
.pen-logo { width: 20px; height: 20px; }
.pen-tools { display: flex; flex-direction: column; justify-content: space-between; width: 20px; height: 230px; margin-top: 4px; border: 1px solid #eee; background: #fff; box-shadow: 0 1px 4px rgba(0, 0, 0, .45); }
.pen-tools svg { width: 18px; height: 17px; }
.pen-tools .hot { height: 18px; background: #3cc0ee; }
.pen-tools .flat { height: 36px; }

.sheets { display: flex; align-items: center; height: 17px; font-size: 10px; padding-right: 15px; color: #555; white-space: nowrap; }
.sheets .nav { margin: 0 22px 0 16px; }
.sheets button { height: 15px; line-height: 13px; padding: 0 9px; border-left: 1px solid #bcbcbc; }
.sheets button.on { height: 17px; background: #fff; color: #217346; border: 0; border-bottom: 2px solid #217346; }
.sheets button.on + button { border-left: 0; }
.sheets .add { margin-left: 20px; }
.sheets .dots { margin-left: auto; margin-right: 8px; }
.hscroll { display: flex; width: 99px; background: #dcdbdd; }
.sheets .hscroll button { width: 11px; height: 11px; padding: 0; border: 1px solid #bbb; }
.hscroll i { width: 71px; height: 11px; margin-right: auto; background: #fff; border: 1px solid #bbb; }
.status { display: flex; align-items: center; height: 17px; padding: 0 5px; background: #f3f3f3; border-top: 1px solid #d5d5d5; }
.disp { display: flex; align-items: center; margin-left: auto; }
.status .v1 { margin-left: 25px; }
.status svg + svg { margin-left: 19px; }
.status .zoomer { margin-left: 14px; }
.status .zoom { margin-left: 13px; color: #bbb; }
.taskbar { display: flex; height: 23px; background: #4a494b; color: #fff; }
.taskbar > span { display: grid; place-content: center; width: 27px; }
.taskbar > span svg { width: 12px; height: 12px; }
.taskbar .open { background: linear-gradient(#5b93cc, #5b93cc) 50% 20px / 21px 2px no-repeat; }
.taskbar .sel { background-color: #6c6b6d; }
.tray { display: flex; align-items: center; gap: 12px; margin-left: auto; padding-right: 17px; }
.tray svg { width: 12px; height: 12px; }
.tray .help { width: 17px; height: 17px; }
.ime { font-size: 13px; }
.han { width: 11px; background: #fff; color: #222; text-align: center; line-height: 11px; }

/* meeting controls, partly below the window edge */
.controls { display: grid; grid-template-columns: 111fr 248fr 127fr 135fr 109fr 124fr 145fr 116fr; align-items: start; margin-top: auto; height: 26px; padding-left: 43px; overflow: visible; }
.controls > div { display: flex; align-items: flex-start; padding-top: 2px; }
.chev { width: 10px; height: 7px; margin: 9px 0 0 25px; color: #a6a6a6; }
.audio .chev { margin-left: 19px; }
.count { margin-left: 7px; font-size: 15px; line-height: 18px; color: #c4c4c4; }
.count + .chev { margin-left: 22px; }
.rec { gap: 7px; }
.controls .rec { padding: 0; }

/* participants */
.search { display: flex; align-items: center; gap: 5px; height: 40px; margin: 14px 21px 0 23px; padding: 0 0 2px 14px; border: 1px solid #b9b5ca; border-radius: 10px; font-size: 17px; font-weight: 300; }
.search input { flex: 1; min-width: 0; height: 30px; }
::placeholder { color: #6e6b7f; opacity: 1; }
.roster { display: flex; justify-content: space-between; padding: 3px 3px 0 22px; }
.roster ul { list-style: none; display: grid; align-content: start; gap: 17px; padding-top: 6px; }
.roster li { width: 34px; height: 34px; border-radius: 10px; color: #fff; font-size: 16px; font-weight: 500; line-height: 34px; text-align: center; }
.blue { background: #2980b9; } .navy { background: #34495e; } .amber { background: #f39c12; } .green { background: #27ae60; }
.violet { background: #8e44ad; } .brick { background: #c0392b; } .rust { background: #d35400; }
.track { display: flex; flex-direction: column; justify-content: flex-end; background: #f2f1f7; border-radius: 5px; }
.track i { background: #aeaeb8; border-radius: 5px; }
.roster .track { width: 9px; height: 904px; }
.roster .track i { height: 249px; }

/* chat */
.log { display: flex; justify-content: space-between; height: 819px; padding: 0 3px 0 23px; overflow: hidden; }
.msgs { display: flex; flex-direction: column; align-items: flex-start; justify-content: flex-end; padding-bottom: 16px; }
.bubble { padding: 9px 14px 11px; border-radius: 16px; background: #f2f1f7; color: #39364a; font-size: 20px; line-height: 31px; white-space: nowrap; }
.mine { background: #dff0ff; }
.from { display: flex; margin: 12px 0 5px; font-size: 17px; line-height: 28px; color: #6e6b7f; white-space: nowrap; }
.from a { color: #0e71eb; }
.chat .track { width: 10px; height: 816px; }
.chat .track i { height: 23px; }
.compose { flex: 1; padding: 14px 19px 0 21px; border-top: 1px solid #e6e6ec; }
.to { display: flex; align-items: center; height: 30px; font-size: 16px; color: #39364a; }
.pick { display: grid; align-items: center; width: 74px; height: 29px; margin-left: 9px; background: #f2f1f7; border-radius: 7px; font-size: 15px; color: #222230; }
.pick select { grid-area: 1 / 1; appearance: none; padding-left: 15px; }
.pick svg { grid-area: 1 / 1; justify-self: end; margin-right: 10px; pointer-events: none; }
.attach { display: flex; align-items: center; gap: 12px; margin-left: auto; }
.more { display: grid; place-content: center; width: 30px; height: 30px; margin-left: 28px; border: 1px solid #dedde8; border-radius: 8px; }
.compose textarea { display: block; width: 100%; margin-top: 6px; font-size: 17px; line-height: 26px; resize: none; overflow: hidden; }
```
